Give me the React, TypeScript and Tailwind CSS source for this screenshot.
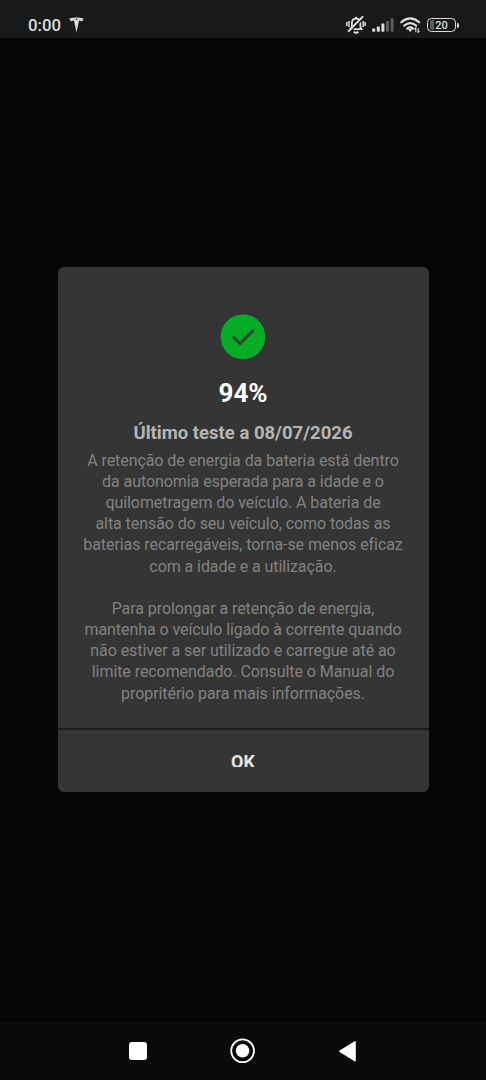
const testDetails = [
  "A retenção de energia da bateria está dentro",
  "da autonomia esperada para a idade e o",
  "quilometragem do veículo. A bateria de",
  "alta tensão do seu veículo, como todas as",
  "baterias recarregáveis, torna-se menos eficaz",
  "com a idade e a utilização.",
];

const testAdvice = [
  "Para prolongar a retenção de energia,",
  "mantenha o veículo ligado à corrente quando",
  "não estiver a ser utilizado e carregue até ao",
  "limite recomendado. Consulte o Manual do",
  "propritério para mais informações.",
];

function TeslaIcon() {
  return (
    <svg width="15" height="16" viewBox="0 0 15 16" fill="#dededf">
      <path d="M.2 1.4Q7.5-.6 14.8 1.4l-.5 1.2Q7.5.9.7 2.6Z" />
      <path d="M.7 2.6Q4 1.6 6 1.9l1.5 1.2L9 1.9q2-.3 5.3.7c-.4 1.2-1.2 1.7-2.1 1.8-.2-.9-.8-1-2.2-1L7.5 15.6 5 3.4c-1.4 0-2 .1-2.2 1-.9-.1-1.7-.6-2.1-1.8Z" />
    </svg>
  );
}

function SilentIcon() {
  return (
    <svg width="20" height="18" viewBox="0 0 20 18" fill="none" stroke="#dededf">
      <path
        d="M4.2 13.2h11.6c-1.1-1-1.5-2-1.5-3.4V7.2c0-2.6-1.7-4.5-4.2-4.5S5.9 4.6 5.9 7.2v2.6c0 1.4-.4 2.4-1.7 3.4Z"
        strokeWidth="1.8"
        strokeLinejoin="round"
      />
      <path d="M10.1 .8v2M7.8 15.8q2.3 1.9 4.6 0" strokeWidth="1.9" />
      <path d="M.8 6v4M3 5v6M17.2 5v6M19.2 6v4" strokeWidth="1.5" />
      <path d="M3.9 16 17.3 2.1" stroke="#18191b" strokeWidth="1.6" />
      <path d="M2.7 15.1 16.5.9" strokeWidth="2" strokeLinecap="round" />
    </svg>
  );
}

function SignalIcon() {
  return (
    <svg width="22" height="14" viewBox="0 0 22 14">
      <g fill="#dededf">
        <rect x=".2" y="10.5" width="3" height="3.3" rx=".8" />
        <rect x="4.8" y="8.5" width="3" height="5.3" rx=".8" />
        <rect x="9.4" y="5.6" width="3" height="8.2" rx=".8" />
      </g>
      <g fill="#5b5c5e">
        <rect x="14" y="3" width="3" height="10.8" rx=".8" />
        <rect x="18.6" y=".2" width="3" height="13.6" rx=".8" />
      </g>
    </svg>
  );
}

function WifiIcon() {
  return (
    <svg width="21" height="16" viewBox="0 0 21 16" fill="none" stroke="#dededf">
      <path
        d="M1.2 5.2q9-7.6 18 0M4.2 8.6q6-5 12 0M7.2 11.6q3-2.4 6 0"
        strokeWidth="2.1"
        strokeLinecap="round"
      />
      <path d="M8 12.6q2.2-1.8 4.4 0L10.2 15Z" fill="#dededf" stroke="none" />
      <path
        d="M15.8 15.2v-4.5l-1.3 1.6M18.1 10.9v4.5l1.3-1.6"
        strokeWidth="1.1"
      />
    </svg>
  );
}

function BatteryIcon({ level }: { level: number }) {
  return (
    <div className="flex items-center">
      <div className="relative flex h-3.5 w-[29px] items-center justify-center rounded-[4.5px] border-[1.5px] border-[#dededf]">
        <div className="absolute inset-y-[1px] left-[1.5px] w-1 rounded-l-[2px] bg-[#5b5c5e]" />
        <span className="relative text-[11px] leading-none font-medium">
          {level}
        </span>
      </div>
      <div className="ml-px h-[5px] w-[1.5px] rounded-r-sm bg-[#dededf]" />
    </div>
  );
}

function StatusBar() {
  return (
    <div className="flex h-[38px] items-start bg-[#18191b] text-[#dededf]">
      <div className="mt-4 ml-7 w-[41px] text-[16.8px] leading-[19px] font-medium">
        0:00
      </div>
      <div className="mt-[17px]">
        <TeslaIcon />
      </div>
      <div className="mt-4 ml-auto">
        <SilentIcon />
      </div>
      <div className="mt-[18px] ml-1.5">
        <SignalIcon />
      </div>
      <div className="mt-[17px] ml-1.5">
        <WifiIcon />
      </div>
      <div className="mt-[18px] mr-[27.5px] ml-1.5">
        <BatteryIcon level={20} />
      </div>
    </div>
  );
}

function CheckBadge() {
  return (
    <svg width="46" height="46" viewBox="0 0 46 46">
      <circle cx="23" cy="22.8" r="22.4" fill="#05ad27" />
      <path
        d="m13.9 23.7 6.2 5.9 12.7-12.8"
        fill="none"
        stroke="#294a31"
        strokeWidth="3.2"
        strokeLinecap="round"
        strokeLinejoin="miter"
      />
    </svg>
  );
}

function Paragraph({ lines }: { lines: string[] }) {
  return (
    <p>
      {lines.map((line) => (
        <span key={line} className="block whitespace-nowrap">
          {line}
        </span>
      ))}
    </p>
  );
}

function BatteryDialog() {
  return (
    <div className="mx-auto mt-[229px] flex h-[525px] w-[371px] flex-col overflow-hidden rounded-[6px] bg-[#353535] text-center">
      <div className="flex h-[463px] flex-col items-center border-b-2 border-[#1d1d1d] pt-[47px]">
        <CheckBadge />
        <div className="mt-[17px] text-[26px] leading-8 font-bold text-white">
          94%
        </div>
        <h1 className="mt-3 text-[18.5px] leading-6 font-bold text-[#b5b5b5]">
          Último teste a 08/07/2026
        </h1>
        <div className="mt-[4.8px] flex flex-col gap-[21.15px] text-[16px] leading-[21.15px] tracking-[-0.07px] text-[#828282]">
          <Paragraph lines={testDetails} />
          <Paragraph lines={testAdvice} />
        </div>
      </div>
      <button className="flex flex-1 justify-center pt-[22px]">
        <span className="h-[15px] overflow-hidden text-[18px] leading-5 font-bold text-[#e4e4e4]">
          OK
        </span>
      </button>
    </div>
  );
}

function NavigationBar() {
  return (
    <div className="flex h-[58px] items-center justify-between bg-[#0a0a0a] pr-[130px] pl-[129px]">
      <svg width="18" height="18" viewBox="0 0 18 18" fill="white">
        <rect width="18" height="18" rx="3" />
      </svg>
      <svg width="26" height="26" viewBox="0 0 26 26" fill="white">
        <circle cx="12.6" cy="12.8" r="11.4" fill="none" stroke="white" strokeWidth="1.8" />
        <circle cx="12.6" cy="12.8" r="6.8" />
      </svg>
      <svg width="17" height="21" viewBox="0 0 17 21" fill="white" stroke="white">
        <path d="M16 1v18.6L1 10.3Z" strokeWidth="1.6" strokeLinejoin="round" />
      </svg>
    </div>
  );
}

export default function App() {
  return (
    <div className="flex h-screen flex-col overflow-hidden bg-[#050505] font-['Roboto',sans-serif]">
      <StatusBar />
      <main className="flex-1">
        <BatteryDialog />
      </main>
      <NavigationBar />
    </div>
  );
}
